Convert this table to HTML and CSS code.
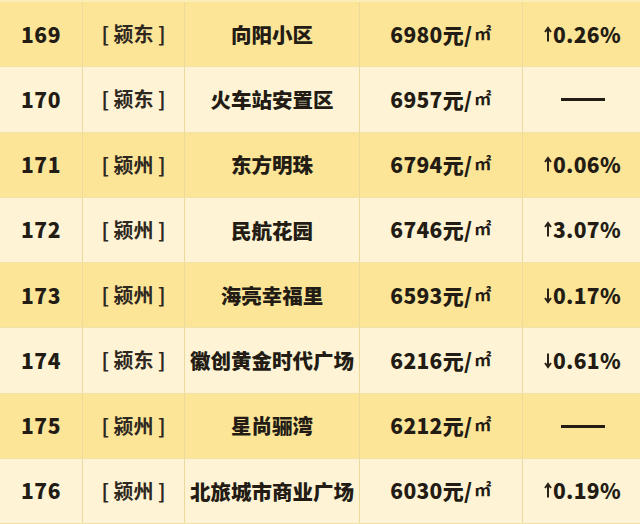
FILE: index.html
```html
<!DOCTYPE html>
<html lang="zh">
<head>
<meta charset="utf-8">
<link rel="stylesheet" href="styles.css">
</head>
<body>
<div class="table">
  <div class="row dark"><div class="c num">169</div><div class="c area">[ 颍东 ]</div><div class="c name">向阳小区</div><div class="c price">6980元/<span class="m2">㎡</span></div><div class="c chg"><svg class="arr" viewBox="0 0 8 16"><path d="M4 15V2M1 5.5L4 1.5L7 5.5" fill="none" stroke="#2a2218" stroke-width="2"/></svg>0.26%</div></div>
  <div class="row light"><div class="c num">170</div><div class="c area">[ 颍东 ]</div><div class="c name">火车站安置区</div><div class="c price">6957元/<span class="m2">㎡</span></div><div class="c chg"><span class="dash"></span></div></div>
  <div class="row dark"><div class="c num">171</div><div class="c area">[ 颍州 ]</div><div class="c name">东方明珠</div><div class="c price">6794元/<span class="m2">㎡</span></div><div class="c chg"><svg class="arr" viewBox="0 0 8 16"><path d="M4 15V2M1 5.5L4 1.5L7 5.5" fill="none" stroke="#2a2218" stroke-width="2"/></svg>0.06%</div></div>
  <div class="row light"><div class="c num">172</div><div class="c area">[ 颍州 ]</div><div class="c name">民航花园</div><div class="c price">6746元/<span class="m2">㎡</span></div><div class="c chg"><svg class="arr" viewBox="0 0 8 16"><path d="M4 15V2M1 5.5L4 1.5L7 5.5" fill="none" stroke="#2a2218" stroke-width="2"/></svg>3.07%</div></div>
  <div class="row dark"><div class="c num">173</div><div class="c area">[ 颍州 ]</div><div class="c name">海亮幸福里</div><div class="c price">6593元/<span class="m2">㎡</span></div><div class="c chg"><svg class="arr" viewBox="0 0 8 16"><path d="M4 1V14M1 10.5L4 14.5L7 10.5" fill="none" stroke="#2a2218" stroke-width="2"/></svg>0.17%</div></div>
  <div class="row light"><div class="c num">174</div><div class="c area">[ 颍东 ]</div><div class="c name">徽创黄金时代广场</div><div class="c price">6216元/<span class="m2">㎡</span></div><div class="c chg"><svg class="arr" viewBox="0 0 8 16"><path d="M4 1V14M1 10.5L4 14.5L7 10.5" fill="none" stroke="#2a2218" stroke-width="2"/></svg>0.61%</div></div>
  <div class="row dark"><div class="c num">175</div><div class="c area">[ 颍州 ]</div><div class="c name">星尚骊湾</div><div class="c price">6212元/<span class="m2">㎡</span></div><div class="c chg"><span class="dash"></span></div></div>
  <div class="row light"><div class="c num">176</div><div class="c area">[ 颍州 ]</div><div class="c name">北旅城市商业广场</div><div class="c price">6030元/<span class="m2">㎡</span></div><div class="c chg"><svg class="arr" viewBox="0 0 8 16"><path d="M4 15V2M1 5.5L4 1.5L7 5.5" fill="none" stroke="#2a2218" stroke-width="2"/></svg>0.19%</div></div>
</div>
</body>
</html>
```
FILE: styles.css
```css
html, body {
  margin: 0;
  padding: 0;
  background: #fef3d2;
}
body {
  width: 640px;
  height: 524px;
  overflow: hidden;
  font-family: "Noto Sans CJK SC", "Noto Sans", sans-serif;
  font-weight: 900;
  color: #231c14;
}
.table {
  padding-top: 2px;
  background: #fdeeb8;
}
.row {
  display: grid;
  grid-template-columns: 83px 102px 175px 163px 117px;
  height: 65.25px;
  box-sizing: border-box;
  border-bottom: 1px solid #f3e2a8;
}
.row.dark { background: #fde598; }
.row.light { background: #fef4d5; }
.c {
  display: flex;
  align-items: center;
  justify-content: center;
  font-size: 21px;
  line-height: 1;
  white-space: nowrap;
  border-right: 1.5px solid #ecd99c;
}
.c:last-child { border-right: none; }
.num { letter-spacing: 0.5px; }
.area { font-weight: 700; color: #2e2820; font-size: 20px; }
.name { font-size: 20.5px; }
.price { letter-spacing: 0.3px; }
.m2 {
  font-size: 17px;
  font-weight: 700;
  margin-left: 2px;
  position: relative;
  top: -2px;
}
.chg { padding-left: 2px; letter-spacing: 0.3px; }
.arr {
  width: 8px;
  height: 17px;
  margin-right: 1px;
}
.dash {
  display: block;
  width: 44px;
  height: 3px;
  background: #231c14;
  margin-top: 1px;
}
```
